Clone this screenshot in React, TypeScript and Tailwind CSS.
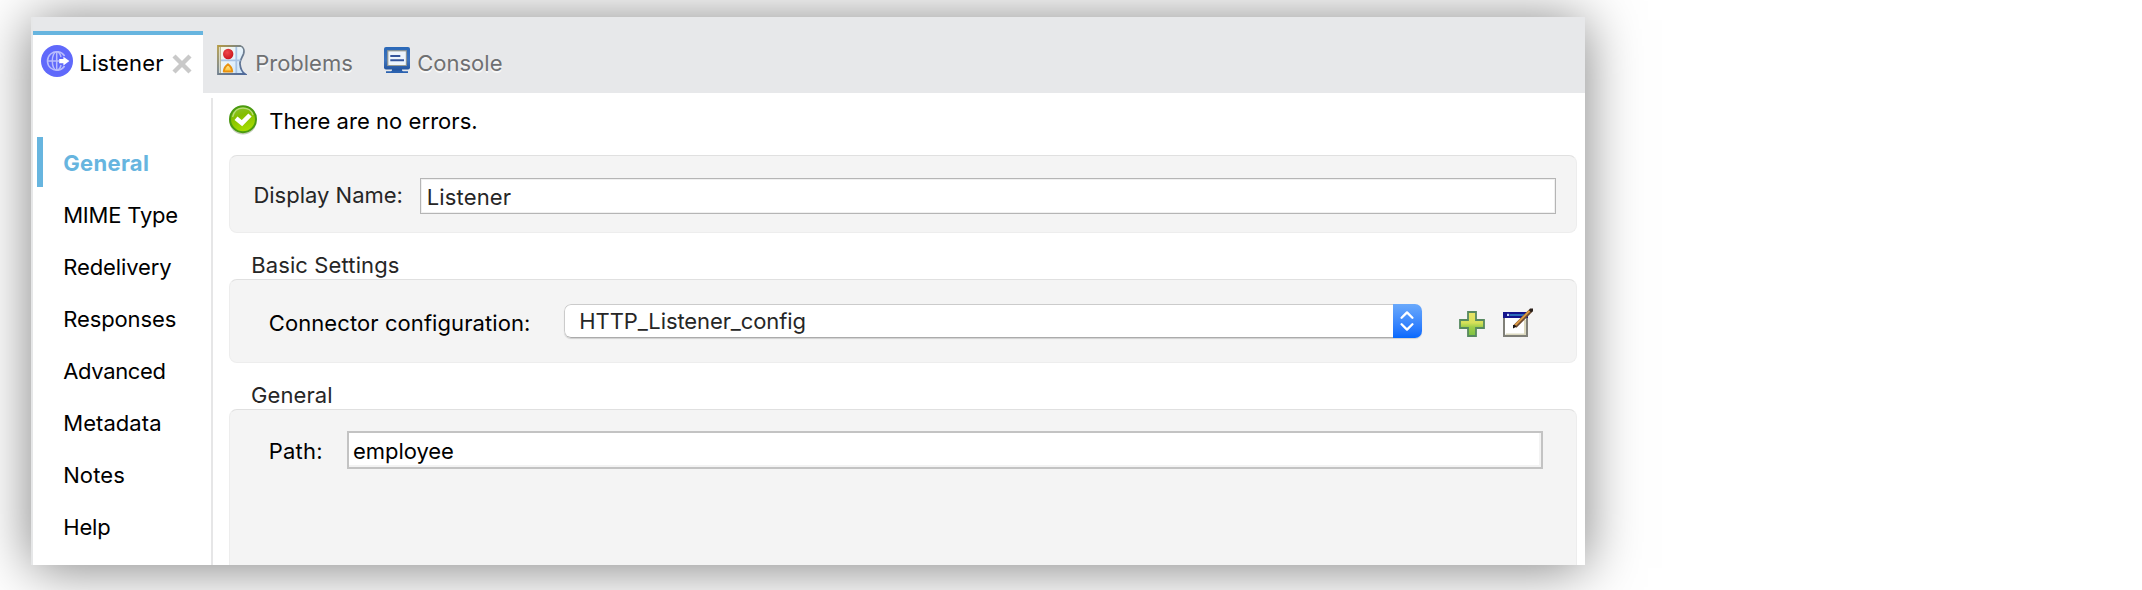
import type { ReactNode } from 'react';

const navItems = [
  { label: 'MIME Type', tracking: 'tracking-[-0.2px]' },
  { label: 'Redelivery', tracking: 'tracking-[-0.1px]' },
  { label: 'Responses', tracking: 'tracking-[-0.1px]' },
  { label: 'Advanced', tracking: 'tracking-[-0.35px]' },
  { label: 'Metadata', tracking: 'tracking-[0.07px]' },
  { label: 'Notes', tracking: 'tracking-[0.1px]' },
  { label: 'Help', tracking: 'tracking-[-0.15px]' },
];

function ListenerIcon() {
  return (
    <svg width="32" height="32" viewBox="0 0 32 32" fill="none">
      <circle cx="16" cy="16" r="16" fill="#6069fb" />
      <g stroke="#b9bdfd" strokeWidth="1.5">
        <path d="M23.6 11A9.3 9.3 0 1 0 23.6 21" />
        <path d="M20 12C19.2 8.7 17.6 6.8 15.7 6.8C13 6.8 11.3 11 11.3 16S13 25.2 15.7 25.2C17.6 25.2 19.2 23.3 20 20" />
        <path d="M15.7 6.8V25.2M6.5 16H18" />
      </g>
      <path d="M18.2 14H22.4V11.8L28.4 16.1L22.4 20.4V18.2H18.2Z" fill="#fff" />
    </svg>
  );
}

function ProblemsIcon() {
  return (
    <svg width="30" height="30" viewBox="0 0 30 30" fill="none">
      <defs>
        <linearGradient id="pbFrame" x1="0" y1="0" x2="1" y2="1">
          <stop offset="0" stopColor="#b39a45" />
          <stop offset="0.45" stopColor="#75818a" />
          <stop offset="1" stopColor="#4f6a9c" />
        </linearGradient>
        <linearGradient id="pbSheet" x1="0" y1="0" x2="1" y2="1">
          <stop offset="0" stopColor="#fbf7e3" />
          <stop offset="0.5" stopColor="#e6f2fb" />
          <stop offset="1" stopColor="#c9e2f7" />
        </linearGradient>
        <radialGradient id="pbRed" cx="0.4" cy="0.35" r="0.7">
          <stop offset="0" stopColor="#f0474a" />
          <stop offset="1" stopColor="#c8141c" />
        </radialGradient>
        <linearGradient id="pbAmber" x1="0" y1="0" x2="0" y2="1">
          <stop offset="0" stopColor="#fff0a0" />
          <stop offset="1" stopColor="#ffc030" />
        </linearGradient>
      </defs>
      <path d="M1 1H23.5C26.5 2 27.6 5.5 26.5 9C25.3 12.5 22.6 15 23 19C23.4 23 25 27 28 29H1Z" fill="url(#pbSheet)" stroke="url(#pbFrame)" strokeWidth="1.8" />
      <path d="M3.2 2V28" stroke="#a79c6c" strokeWidth="1" />
      <path d="M4 15.3H23.5M19.3 2V28" stroke="#a9c3e4" strokeWidth="1.8" />
      <circle cx="11.2" cy="9" r="5.2" fill="url(#pbRed)" />
      <path d="M11 19.2C13.2 20.8 15 23 15.2 26.5H6.8C7 23 8.8 20.8 11 19.2Z" fill="url(#pbAmber)" stroke="#e9920f" strokeWidth="2" strokeLinejoin="round" />
    </svg>
  );
}

function ConsoleIcon() {
  return (
    <svg width="26" height="26" viewBox="0 0 26 26" fill="none">
      <defs>
        <linearGradient id="csBody" x1="0" y1="0" x2="0" y2="1">
          <stop offset="0" stopColor="#2a68b8" />
          <stop offset="0.6" stopColor="#3f74bd" />
          <stop offset="1" stopColor="#2556a0" />
        </linearGradient>
      </defs>
      <rect width="26" height="22.4" rx="2" fill="url(#csBody)" />
      <rect x="3.2" y="3.2" width="19.6" height="15.8" fill="#9c9d92" />
      <rect x="4.4" y="4.4" width="17.4" height="13.6" fill="#edf5fd" />
      <path d="M6.3 9H16.3M6.3 13.3H20" stroke="#34559c" strokeWidth="1.9" />
      <path d="M8 22H18V24H8Z" fill="#2556a0" />
      <path d="M2 24.2H7L8 23.4H18L19 24.2H24V26H2Z" fill="#2b62b0" />
    </svg>
  );
}

function OkIcon() {
  return (
    <svg width="28" height="30" viewBox="0 0 28 30" fill="none">
      <defs>
        <linearGradient id="okFill" x1="0" y1="0" x2="0.3" y2="1">
          <stop offset="0" stopColor="#8cc63a" />
          <stop offset="0.45" stopColor="#84bd00" />
          <stop offset="1" stopColor="#a5dc00" />
        </linearGradient>
      </defs>
      <ellipse cx="14" cy="15.8" rx="13.8" ry="13.6" fill="#a9b79a" fillOpacity="0.7" />
      <circle cx="14" cy="14.2" r="13" fill="url(#okFill)" stroke="#4a9a10" strokeWidth="2" />
      <path d="M3.6 12C5 6 9 3.2 14 3.2S22.5 5.5 24 10" stroke="#b7dc7a" strokeWidth="1.2" />
      <path d="M7 13.2L13 18.2L21 10" stroke="#fff" strokeWidth="4.6" />
    </svg>
  );
}

function AddIcon() {
  return (
    <svg width="26" height="26" viewBox="0 0 26 26">
      <defs>
        <linearGradient id="addFill" x1="0" y1="0" x2="0" y2="1">
          <stop offset="0" stopColor="#e9e466" />
          <stop offset="0.45" stopColor="#d6e05a" />
          <stop offset="0.62" stopColor="#9fcf4a" />
          <stop offset="1" stopColor="#7cc242" />
        </linearGradient>
      </defs>
      <path d="M9 1H17V9H25V17H17V25H9V17H1V9H9Z" fill="url(#addFill)" stroke="#57895f" strokeWidth="1.8" />
    </svg>
  );
}

function EditIcon() {
  return (
    <svg width="31" height="30" viewBox="0 0 31 30">
      <path d="M0 4H25V29H0Z" fill="#808078" />
      <path d="M2 10H23V26.8H2Z" fill="#fff" />
      <path d="M21 12H23V27H3V25.4H21Z" fill="#dcd9bf" />
      <path d="M0 4H25V10H0Z" fill="#14148c" />
      <path d="M7 6H21V8H7Z" fill="#2c6cb8" />
      <path d="M4 5.8H6.2V8H4Z" fill="#c4d8f6" />
      <path d="M12 18.4L27.8 2.6" stroke="#6b4a30" strokeWidth="4" />
      <path d="M12.2 17.2L26.6 2.8" stroke="#dc9a44" strokeWidth="2" />
      <path d="M27 0.4H30V3.6L28 4.2L26 2.2Z" fill="#2c211b" />
      <path d="M10 17H12L13.4 18.8L10 20.4Z" fill="#1c1512" />
    </svg>
  );
}

function Panel({ children, className }: { children?: ReactNode; className: string }) {
  return (
    <section className={`flex shrink-0 items-start border border-[#ededed] border-t-[#e0e0e0] bg-[#f4f4f4] ${className}`}>
      {children}
    </section>
  );
}

export default function App() {
  return (
    <div className="h-[590px] w-full overflow-hidden bg-white pl-[31px] pt-[17px] font-['Inter',sans-serif] text-[22px] leading-[26px] text-black">
      <div className="h-[548px] w-[1554px] shadow-[0_3px_52px_rgba(0,0,0,0.5)]">
        <div className="flex h-full flex-col overflow-hidden border-l-2 border-[#e6e7e8] bg-white">
          <header className="flex h-[76px] shrink-0 items-start bg-[#e7e8ea] pt-3.5">
            <div className="flex h-[62px] w-[170px] items-start border-t-4 border-[#67b5df] bg-white pl-2 pt-2.5">
              <ListenerIcon />
              <span className="ml-[6.2px] mt-[5px] tracking-[0.14px]">Listener</span>
              <svg className="ml-[8.8px] mt-[9px]" width="20" height="20" viewBox="0 0 20 20">
                <path d="M2 2L18 18M18 2L2 18" stroke="#c9c9c9" strokeWidth="4.4" />
              </svg>
            </div>
            <div className="flex items-start pl-3.5 pt-3.5 text-[#6f7072] [text-shadow:0_2px_0_#f8f8f8]">
              <ProblemsIcon />
              <span className="ml-[8.3px] mt-[5px] tracking-[-0.03px]">Problems</span>
            </div>
            <div className="flex items-start pl-[31px] pt-4 text-[#6f7072] [text-shadow:0_2px_0_#f8f8f8]">
              <ConsoleIcon />
              <span className="ml-[7.5px] mt-[3px]">Console</span>
            </div>
          </header>

          <div className="flex min-h-0 flex-1">
            <nav className="mt-[5px] flex w-[180px] shrink-0 flex-col border-r-2 border-[#e6e6e7] pl-1 pt-[39px]">
              <div className="flex h-[50px] shrink-0 items-center border-l-6 border-[#67b5df] pl-[20.3px] pt-0.5 font-bold tracking-[0.3px] text-[#67b5df]">
                General
              </div>
              <ul className="mt-[2px]">
                {navItems.map((item) => (
                  <li key={item.label} className={`flex h-[52px] items-center pl-[26.2px] ${item.tracking}`}>
                    {item.label}
                  </li>
                ))}
              </ul>
            </nav>

            <main className="flex min-w-0 flex-1 flex-col pl-4 pr-2">
              <div className="flex h-[62px] shrink-0 items-start pt-3">
                <OkIcon />
                <span className="ml-[12.3px] mt-[3px] tracking-[0.05px]">There are no errors.</span>
              </div>

              <Panel className="h-[78px] rounded-lg pl-[23.4px] pr-5 pt-[22px] text-[#262626]">
                <span className="w-[166.6px] pt-1">Display Name:</span>
                <div className="h-9 flex-1 border border-[#b5b5b5] bg-white pl-[5.8px] pt-[5px] tracking-[0.14px] shadow-[inset_0_0_0_1px_#f0f0f0]">
                  Listener
                </div>
              </Panel>

              <h2 className="mt-[19px] h-[27px] shrink-0 pl-[22.2px] tracking-[0.12px] text-[#262626]">Basic Settings</h2>
              <Panel className="h-[84px] rounded-lg pl-[38.8px] pt-6">
                <span className="w-[295.2px] pt-1.5 tracking-[0.08px]">Connector configuration:</span>
                <div className="flex h-[34px] w-[858px] overflow-hidden rounded-[7px] shadow-[0_1px_1px_rgba(0,0,0,0.15)]">
                  <div className="flex-1 rounded-l-[7px] border border-r-0 border-[#cbcbcb] border-b-[#ababab] bg-white pl-[14.3px] pt-[3px] tracking-[-0.1px] text-[#262626]">
                    HTTP_Listener_config
                  </div>
                  <div className="flex w-[29px] items-center justify-center bg-linear-to-b from-[#6aa9fb] to-[#0468fd]">
                    <svg width="14" height="20" viewBox="0 0 14 20" fill="none" stroke="#fff" strokeWidth="2.3" strokeLinecap="round" strokeLinejoin="round">
                      <path d="M1.6 6.8L7 1.4L12.4 6.8M1.6 13.2L7 18.6L12.4 13.2" />
                    </svg>
                  </div>
                </div>
                <button className="ml-[37px] mt-[7px]" aria-label="Add">
                  <AddIcon />
                </button>
                <button className="ml-[18px] mt-1" aria-label="Edit">
                  <EditIcon />
                </button>
              </Panel>

              <h2 className="mt-[19px] h-[27px] shrink-0 pl-[22px] tracking-[0.1px] text-[#262626]">General</h2>
              <Panel className="h-[170px] rounded-t-lg pl-[38.8px] pr-[33px] pt-[21px]">
                <span className="w-[78.2px] pt-[7px] tracking-[0.2px]">Path:</span>
                <div className="h-[38px] flex-1 border-2 border-[#c3c3c3] bg-white pl-1 pt-[5px] tracking-[-0.05px] shadow-[inset_-2px_-2px_0_#f3f3f3]">
                  employee
                </div>
              </Panel>
            </main>
          </div>
        </div>
      </div>
    </div>
  );
}
